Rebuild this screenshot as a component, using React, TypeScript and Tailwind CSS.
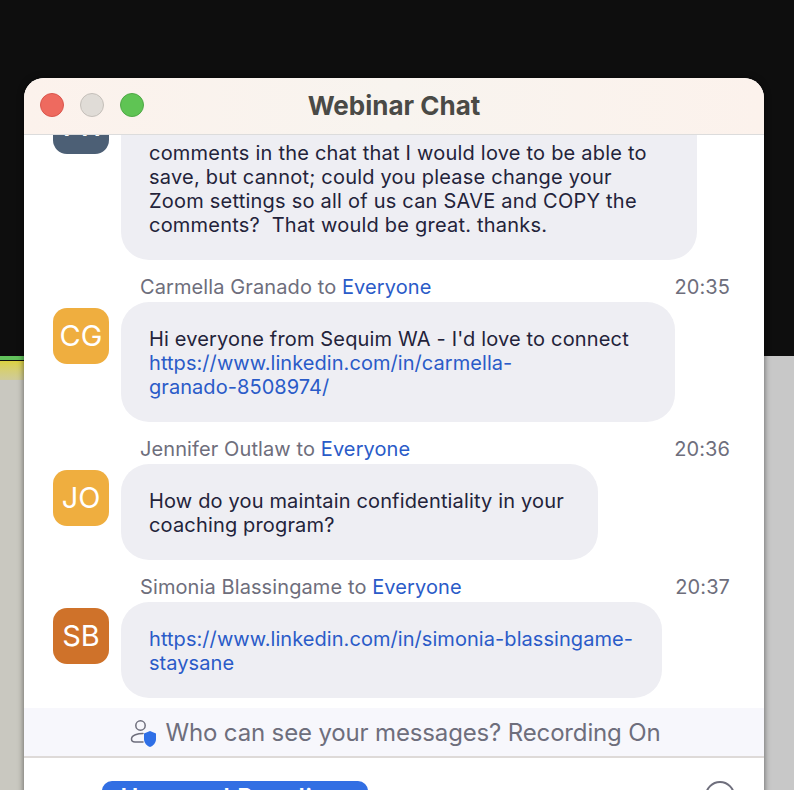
const MESSAGES = [
  {
    initials: 'CG',
    color: 'bg-[#efae3f]',
    name: 'Carmella Granado',
    time: '20:35',
    width: 'w-[554px]',
    body: (
      <>
        Hi everyone from Sequim WA - I'd love to connect
        <br />
        <span className="tracking-[0.06px] text-[#2a5bc8]">
          https://www.linkedin.com/in/carmella-
          <br />
          granado-8508974/
        </span>
      </>
    ),
  },
  {
    initials: 'JO',
    color: 'bg-[#efae3f]',
    name: 'Jennifer Outlaw',
    time: '20:36',
    width: 'w-[477px]',
    body: (
      <>
        How do you maintain confidentiality in your
        <br />
        coaching program?
      </>
    ),
  },
  {
    initials: 'SB',
    color: 'bg-[#cf722a]',
    name: 'Simonia Blassingame',
    time: '20:37',
    width: 'w-[541px]',
    body: (
      <span className="tracking-[0.06px] whitespace-nowrap text-[#2a5bc8]">
        https://www.linkedin.com/in/simonia-blassingame-
        <br />
        staysane
      </span>
    ),
  },
]

function PrivacyIcon() {
  return (
    <svg width="26" height="28" viewBox="0 0 26 28" fill="none" className="shrink-0">
      <circle cx="10.5" cy="6.5" r="4.7" stroke="#6e6e7c" strokeWidth="1.5" />
      <path d="M13 14.5C8 14.5 1.5 16 1.5 20C1.5 22 3 23 5 23H13" stroke="#6e6e7c" strokeWidth="1.5" strokeLinecap="round" />
      <path d="M20 12L26 14.5V20C26 24 23 27 20 28C17 27 14 24 14 20V14.5Z" fill="#2f6fe6" />
    </svg>
  )
}

export default function App() {
  return (
    <div className="relative h-[790px] w-[794px] overflow-hidden bg-[#0e0e0e]" style={{ fontFamily: "Inter, 'Liberation Sans', sans-serif" }}>
      {/* Desktop behind the window */}
      <div className="absolute inset-x-0 top-[356px] bottom-0 flex">
        <div className="flex w-6 flex-col">
          <div className="h-1 bg-[#62c25c]" />
          <div className="h-px bg-[#111111]" />
          <div className="h-[19px] bg-gradient-to-b from-[#dcd13e] to-[#cfcb9a]" />
          <div className="flex-1 bg-[#c9c8c0]" />
        </div>
        <div className="flex-1 bg-[#c8c8c8]" />
      </div>

      {/* Chat window */}
      <div className="absolute left-6 top-[78px] flex h-[760px] w-[740px] flex-col overflow-hidden rounded-t-[20px] bg-white shadow-[0_0_6px_rgba(0,0,0,0.55)]">
        <div className="relative flex h-[57px] shrink-0 items-center justify-center border-b border-[#dcdcdc] bg-gradient-to-r from-[#fcf2ec] via-[#f8f4ef] to-[#fcf2ec] pb-[2px]">
          <div className="absolute left-4 flex gap-4">
            <span className="h-6 w-6 rounded-full border border-[#d9564d] bg-[#ee6a5f]" />
            <span className="h-6 w-6 rounded-full border border-[#c4bfb9] bg-[#e0dcd7]" />
            <span className="h-6 w-6 rounded-full border border-[#4fa846] bg-[#5fc454]" />
          </div>
          <span className="text-[26px] font-bold text-[#4a4a46]">Webinar Chat</span>
        </div>

        <div className="h-[573px] shrink-0 overflow-hidden px-[29px]">
          {/* First message is scrolled partly out of view */}
          <div className="-mt-[43px] flex items-start gap-3">
            <div className="mt-[6px] flex h-14 w-14 shrink-0 items-center justify-center rounded-[14px] bg-[#4c5f75] text-[29px] text-white">
              VW
            </div>
            <div className="w-[576px] rounded-[28px] bg-[#eeeef3] px-7 pt-[25px] pb-[23px] text-[20px] leading-6 tracking-[0.22px] text-[#23233a]">
              <span className="block h-6" />
              comments in the chat that I would love to be able to
              <br />
              save, but cannot; could you please change your
              <br />
              Zoom settings so all of us can SAVE and COPY the
              <br />
              comments?&nbsp; That would be great. thanks.
            </div>
          </div>

          {MESSAGES.map(m => (
            <div key={m.name} className="pt-[15px]">
              <div className="flex h-[27px] items-start justify-between pr-[5px] pl-[87px] text-[20px] leading-6 tracking-[0.1px] text-[#6e6e7c]">
                <span>
                  {m.name} to <span className="text-[#2a5bc8]">Everyone</span>
                </span>
                <span>{m.time}</span>
              </div>
              <div className="flex items-start gap-3">
                <div className={`mt-[6px] flex h-14 w-14 shrink-0 items-center justify-center rounded-[14px] text-[29px] text-white ${m.color}`}>
                  {m.initials}
                </div>
                <div className={`${m.width} rounded-[28px] bg-[#eeeef3] px-7 pt-[25px] pb-[23px] text-[20px] leading-6 tracking-[0.16px] text-[#23233a]`}>
                  {m.body}
                </div>
              </div>
            </div>
          ))}
        </div>

        <div className="flex h-[50px] shrink-0 items-center justify-center gap-[9px] border-b-2 border-[#dedad8] bg-[#f7f7fc] pt-[2px] pl-[3px] text-[24px] tracking-[-0.15px] text-[#6e6e7c]">
          <PrivacyIcon />
          <span>Who can see your messages? Recording On</span>
        </div>

        <div className="flex items-start justify-between pt-[23px] pl-[78px] pr-[29px]">
          <div className="flex h-10 w-[266px] justify-center rounded-[10px] bg-[#326fe3] text-[24px] leading-[34px] font-semibold tracking-[0.8px] text-white">
            Host and Panelists
          </div>
          <div className="h-[30px] w-[30px] rounded-full border-2 border-[#6e6e7c]" />
        </div>
      </div>
    </div>
  )
}
